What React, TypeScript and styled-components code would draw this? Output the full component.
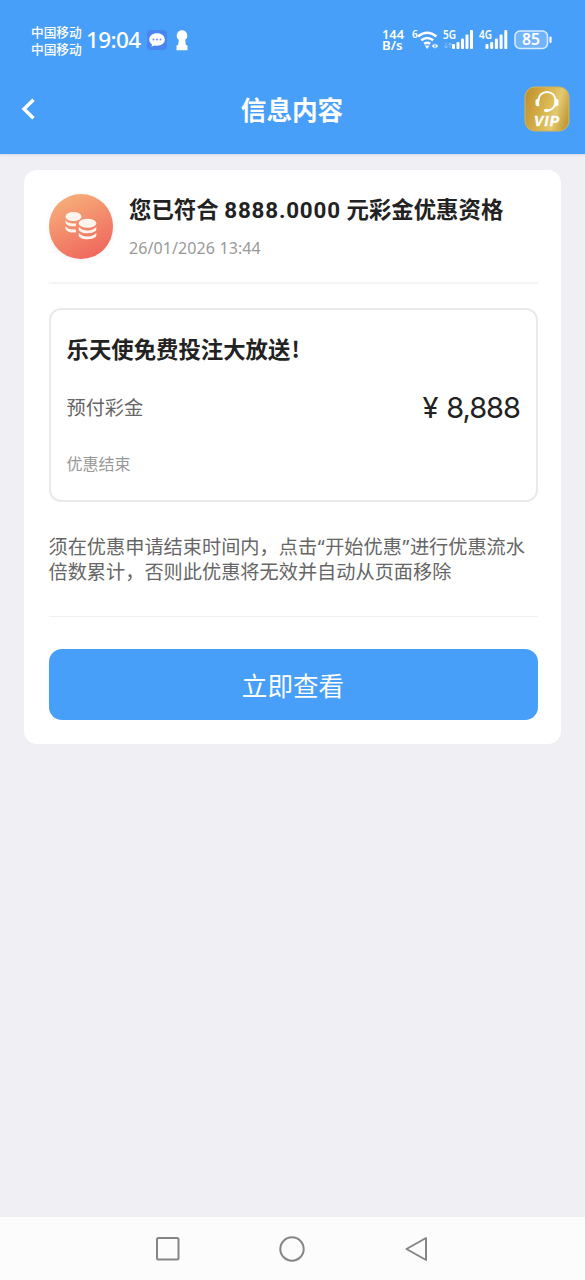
import React from "react";
import styled, { createGlobalStyle } from "styled-components";

const BLUE = "#489ffa";
const CJK = `"Noto Sans CJK SC", sans-serif`;

const GlobalStyle = createGlobalStyle`
  * { box-sizing: border-box; }
  html, body { margin: 0; background: #efeff4; }
  body { font-family: ${CJK}; color: #222; }
  h1, h2, h3, p { margin: 0; }
  svg { display: block; flex: none; overflow: visible; }
`;

const Screen = styled.div`
  width: 585px;
  height: 1280px;
  display: flex;
  flex-direction: column;
  overflow: hidden;
  background: #efeff4;
`;

const TopArea = styled.header`
  flex: none;
  height: 154px;
  background: ${BLUE};
  color: #fff;
  box-shadow: 0 1px 2px rgba(60, 90, 140, 0.15);
`;

const StatusBar = styled.div`
  height: 80px;
  padding: 0 32px 0 31px;
  display: flex;
  align-items: center;
  justify-content: space-between;
`;

const StatusGroup = styled.div`
  display: flex;
  align-items: center;
`;

const Carriers = styled.div`
  width: 52px;
  margin-top: -1px;
  font-size: 12.7px;
  font-weight: 500;
  line-height: 17px;
  white-space: nowrap;
`;

const Clock = styled.div`
  width: 61px;
  margin-left: 3px;
  font: 500 22.5px/28px "Noto Sans", sans-serif;
  letter-spacing: -0.6px;
  white-space: nowrap;
`;

const NavBar = styled.div`
  height: 58px;
  padding: 0 15px 0 20px;
  display: grid;
  grid-template-columns: 40px 1fr 46px;
  align-items: center;
`;

const NavTitle = styled.h1`
  text-align: center;
  font-size: 25.6px;
  line-height: 36px;
  font-weight: 700;
`;

const BackButton = styled.button`
  padding: 0;
  border: 0;
  background: none;
  color: inherit;
`;

const Content = styled.main`
  flex: 1;
  padding: 16px 24px;
`;

const Card = styled.article`
  height: 574px;
  padding: 0 23.5px 0 24.5px;
  background: #fff;
  border-radius: 13px;
`;

const MessageHead = styled.div`
  height: 114px;
  padding-top: 24px;
  display: flex;
  gap: 16px;
  border-bottom: 2px solid #f4f4f4;
`;

const CoinBadge = styled.div`
  flex: none;
  width: 64.5px;
  height: 64.5px;
  border-radius: 50%;
  display: flex;
  align-items: center;
  justify-content: center;
  background: linear-gradient(155deg, #f7b27b 5%, #ef625b 95%);
  box-shadow: 0 2px 5px rgba(120, 130, 140, 0.1);
`;

const MessageTitle = styled.h2`
  margin-top: -2px;
  font-size: 22.4px;
  line-height: 32px;
  font-weight: 700;
  white-space: nowrap;
`;

const Amount = styled.span`
  display: inline-block;
  width: 128px;
  text-align: center;
  font-family: Roboto, sans-serif;
  font-size: 22.4px;
  font-weight: 700;
  letter-spacing: 0.8px;
`;

const MessageDate = styled.p`
  margin-top: 8px;
  font: 400 16px/28px "Noto Sans", sans-serif;
  letter-spacing: 0.1px;
  color: #999;
`;

const PromoBox = styled.section`
  height: 194px;
  margin-top: 24px;
  padding: 21px 15.5px 0 16px;
  border: 2px solid #e9e9ea;
  border-radius: 12px;
`;

const PromoTitle = styled.h3`
  font-size: 22.4px;
  line-height: 34px;
  font-weight: 700;
`;

const Bang = styled.span`
  margin-left: 1px;
`;

const PromoRow = styled.div`
  height: 40px;
  margin-top: 22px;
  display: flex;
  align-items: center;
  justify-content: space-between;
  font-size: 19.2px;
  color: #666;
`;

const Price = styled.span`
  padding-top: 2px;
  font: 400 29px/40px Inter, sans-serif;
  letter-spacing: -1px;
  word-spacing: 1.5px;
  color: #222;
`;

const PromoEnd = styled.p`
  margin-top: 24px;
  font-size: 16px;
  line-height: 24px;
  color: #999;
`;

const Notice = styled.p`
  height: 115px;
  padding-top: 32px;
  border-bottom: 1px solid #f1f1f1;
  font-size: 19.2px;
  line-height: 25px;
  color: #666;
  white-space: nowrap;
`;

const Quote = styled.span`
  display: inline-block;
  width: 8px;
  text-align: center;
  font-family: "Noto Sans", sans-serif;
  line-height: 18px;
`;

const ViewButton = styled.button`
  display: block;
  width: 100%;
  height: 71px;
  margin-top: 32px;
  padding: 0;
  border: 0;
  border-radius: 13px;
  background: ${BLUE};
  color: #fff;
  font: 400 25.6px/70px ${CJK};
`;

const SystemNav = styled.nav`
  flex: none;
  height: 63px;
  padding: 0 156px 0 155px;
  display: flex;
  align-items: center;
  justify-content: space-between;
  background: #fcfcfc;
`;

const SmallLabel = styled.text`
  font-family: "Noto Sans", sans-serif;
  font-weight: 600;
  fill: #fff;
`;

const NetSpeedSvg = styled.svg`
  margin-right: 8px;
`;

const NetSpeed = () => (
  <NetSpeedSvg width="22" height="24" viewBox="0 0 22 24">
    <SmallLabel x="0" y="11" fontSize="12.5" textLength="22" lengthAdjust="spacingAndGlyphs">144</SmallLabel>
    <SmallLabel x="0" y="22" fontSize="12.5" textLength="20.5" lengthAdjust="spacingAndGlyphs">B/s</SmallLabel>
  </NetSpeedSvg>
);

const ChatIcon = () => (
  <svg width="20" height="20" viewBox="0 0 20 20">
    <rect width="20" height="20" rx="4" fill="#4b85f2" />
    <path d="M10 3.3c-4.4 0-7.8 2.7-7.8 6.2 0 2 1.1 3.8 2.8 4.9l-.5 2.4 3-1.4c.8.2 1.6.3 2.5.3 4.4 0 7.8-2.7 7.8-6.2S14.4 3.3 10 3.3z" fill="#fff" />
    <g fill="#6c8df0"><circle cx="6.500" cy="9.500" r="1" /><circle cx="10" cy="9.500" r="1" /><circle cx="13.500" cy="9.500" r="1" /></g>
  </svg>
);

const KeyholeSvg = styled.svg`
  margin-left: 9px;
`;

const KeyholeIcon = () => (
  <KeyholeSvg width="12" height="21" viewBox="0 0 12 21">
    <path d="M6 .3A5.300 5.300 0 0 0 2.800 9.800L2.200 15H1.500Q.5 15 .5 16v4.300h11V16q0-1-1-1h-.7l-.6-5.200A5.300 5.300 0 0 0 6 .3z" fill="#fff" />
  </KeyholeSvg>
);

const WifiIcon = () => (
  <svg width="31" height="24" viewBox="0 0 31 24">
    <SmallLabel x="0" y="9.500" fontSize="10">6</SmallLabel>
    <g fill="none" stroke="#fff" strokeWidth="2.400">
      <path d="M6 8.500q9.200-7.500 18.400 0" />
      <path d="M9.200 12.300q6-4.800 12 0" />
      <path d="M12.200 15.800q3-2.300 6 0" />
    </g>
    <path d="M12.800 17.500h4.800L15.200 21z" fill="#fff" />
    <path d="M22.500 15.500v5L19.700 18zM23.500 15.500v5l2.800-2.500z" fill="#fff" />
  </svg>
);

const SignalSvg = styled.svg<{ $gap: number }>`
  margin-right: ${(p) => p.$gap}px;
`;

const SignalIcon = ({ label, dim, gap }: { label: string; dim?: boolean; gap: number }) => (
  <SignalSvg $gap={gap} width="31" height="24" viewBox="0 0 31 24">
    <SmallLabel x="0" y="11" fontSize="12" textLength="13" lengthAdjust="spacingAndGlyphs">{label}</SmallLabel>
    {dim && <path d="M3 15v5M1 18l2 2 2-2M7 20v-5M5.500 17L7 15l2 2" fill="none" stroke="#fff" strokeOpacity=".3" />}
    <g fill="#fff">
      <rect x={dim ? 9 : 6.5} y="16" width="3" height="5" rx="1" />
      <rect x={dim ? 13.5 : 11.2} y="14" width="3" height="7" rx="1" />
      <rect x={dim ? 18 : 15.9} y="10.5" width="3" height="10.5" rx="1" />
      <rect x={dim ? 22.5 : 20.6} y="6.5" width="3" height="14.5" rx="1" />
      <rect x={dim ? 27 : 25.3} y="2" width="3" height="19" rx="1" />
    </g>
  </SignalSvg>
);

const BatteryIcon = () => (
  <svg width="39" height="20" viewBox="0 0 39 20">
    <rect x="1" y="1" width="32.500" height="17.500" rx="5" fill="#72b4fb" stroke="#d8eaff" strokeWidth="1.600" />
    <path d="M36.500 7.500v4.500" stroke="#fff" strokeWidth="2.200" strokeLinecap="round" />
    <SmallLabel x="8" y="15.200" fontSize="15.500" textLength="18" lengthAdjust="spacingAndGlyphs">85</SmallLabel>
  </svg>
);

const VipIcon = () => (
  <svg width="46" height="46" viewBox="0 0 46 46">
    <defs>
      <linearGradient id="gold" x1="0" y1="0.3" x2="1" y2="0.6">
        <stop offset="0" stopColor="#c1932f" />
        <stop offset=".5" stopColor="#dbb850" />
        <stop offset=".72" stopColor="#e4c970" />
        <stop offset="1" stopColor="#c39b36" />
      </linearGradient>
    </defs>
    <rect x="1" y="1" width="44" height="44" rx="10" fill="url(#gold)" stroke="#d5b459" />
    <path d="M14.500 15v-1a8.500 8 0 0 1 17 0v1q0 8-7.500 9.700" fill="none" stroke="#fff" strokeWidth="2" />
    <path d="M15.200 12.800v7.500h-1.300a2.600 2.600 0 0 1-2.400-2.800v-2a2.600 2.600 0 0 1 2.400-2.700zM30.800 12.800v7.500h1.300a2.600 2.600 0 0 0 2.400-2.800v-2a2.600 2.600 0 0 0-2.400-2.700z" fill="#fff" />
    <ellipse cx="22.500" cy="24.500" rx="2.600" ry="1.700" fill="#fff" />
    <text x="10" y="40.300" textLength="25" fill="#fff" stroke="#fff" strokeWidth=".4" fontFamily="Liberation Sans, sans-serif" fontSize="14" fontWeight="700" fontStyle="italic">VIP</text>
  </svg>
);

const CoinsIcon = () => (
  <svg width="32" height="30" viewBox="0 0 32 30">
    <g fill="#fff5ee">
      <ellipse cx="8.500" cy="5.500" rx="8" ry="4.500" />
      <path d="M.5 9q2.200 3.500 8 3.500 1.500 0 3-.3-.6 1-.6 3-7 .8-9.600-2.200Q.5 12.200.5 11.200zM.5 15q2.200 3.500 8 3.500h2.400v3q-6.900.6-9.600-2.300-.8-.8-.8-1.900z" />
      <ellipse cx="22.500" cy="12.300" rx="8.800" ry="4.500" />
      <path d="M13.700 15.700q2.600 3.700 8.800 3.700t8.800-3.700v2.500q0 1-.8 1.700-2.700 2.300-8 2.300t-8-2.300q-.8-.7-.8-1.700zM13.700 21.700q2.600 3.700 8.800 3.700t8.800-3.700v2.500q0 1-.8 1.700-2.700 2.300-8 2.300t-8-2.300q-.8-.7-.8-1.700z" />
    </g>
  </svg>
);

export default function App() {
  return (
    <Screen>
      <GlobalStyle />
      <TopArea>
        <StatusBar>
          <StatusGroup>
            <Carriers>中国移动<br />中国移动</Carriers>
            <Clock>19:04</Clock>
            <ChatIcon />
            <KeyholeIcon />
          </StatusGroup>
          <StatusGroup>
            <NetSpeed />
            <WifiIcon />
            <SignalIcon label="5G" dim gap={5} />
            <SignalIcon label="4G" gap={4} />
            <BatteryIcon />
          </StatusGroup>
        </StatusBar>
        <NavBar>
          <BackButton aria-label="返回">
            <svg width="18" height="24" viewBox="0 0 18 24">
              <path d="M13.500 2.800L4 12l9.500 9.200" fill="none" stroke="#fff" strokeWidth="3.400" />
            </svg>
          </BackButton>
          <NavTitle>信息内容</NavTitle>
          <VipIcon />
        </NavBar>
      </TopArea>
      <Content>
        <Card>
          <MessageHead>
            <CoinBadge><CoinsIcon /></CoinBadge>
            <div>
              <MessageTitle>您已符合<Amount>8888.0000</Amount>元彩金优惠资格</MessageTitle>
              <MessageDate>26/01/2026 13:44</MessageDate>
            </div>
          </MessageHead>
          <PromoBox>
            <PromoTitle>乐天使免费投注大放送<Bang>!</Bang></PromoTitle>
            <PromoRow>
              <span>预付彩金</span>
              <Price>¥ 8,888</Price>
            </PromoRow>
            <PromoEnd>优惠结束</PromoEnd>
          </PromoBox>
          <Notice>
            须在优惠申请结束时间内，点击<Quote>“</Quote>开始优惠<Quote>”</Quote>进行优惠流水<br />
            倍数累计，否则此优惠将无效并自动从页面移除
          </Notice>
          <ViewButton>立即查看</ViewButton>
        </Card>
      </Content>
      <SystemNav>
        <svg width="26" height="26" viewBox="0 0 26 26" fill="none" stroke="#858585" strokeWidth="2">
          <rect x="2" y="2" width="21.500" height="21.500" rx="1.500" />
        </svg>
        <svg width="26" height="26" viewBox="0 0 26 26" fill="none" stroke="#858585" strokeWidth="2">
          <circle cx="13" cy="13" r="11.700" />
        </svg>
        <svg width="26" height="26" viewBox="0 0 26 26" fill="none" stroke="#858585" strokeWidth="2" strokeLinejoin="round">
          <path d="M23 2v22L3.500 13z" />
        </svg>
      </SystemNav>
    </Screen>
  );
}
